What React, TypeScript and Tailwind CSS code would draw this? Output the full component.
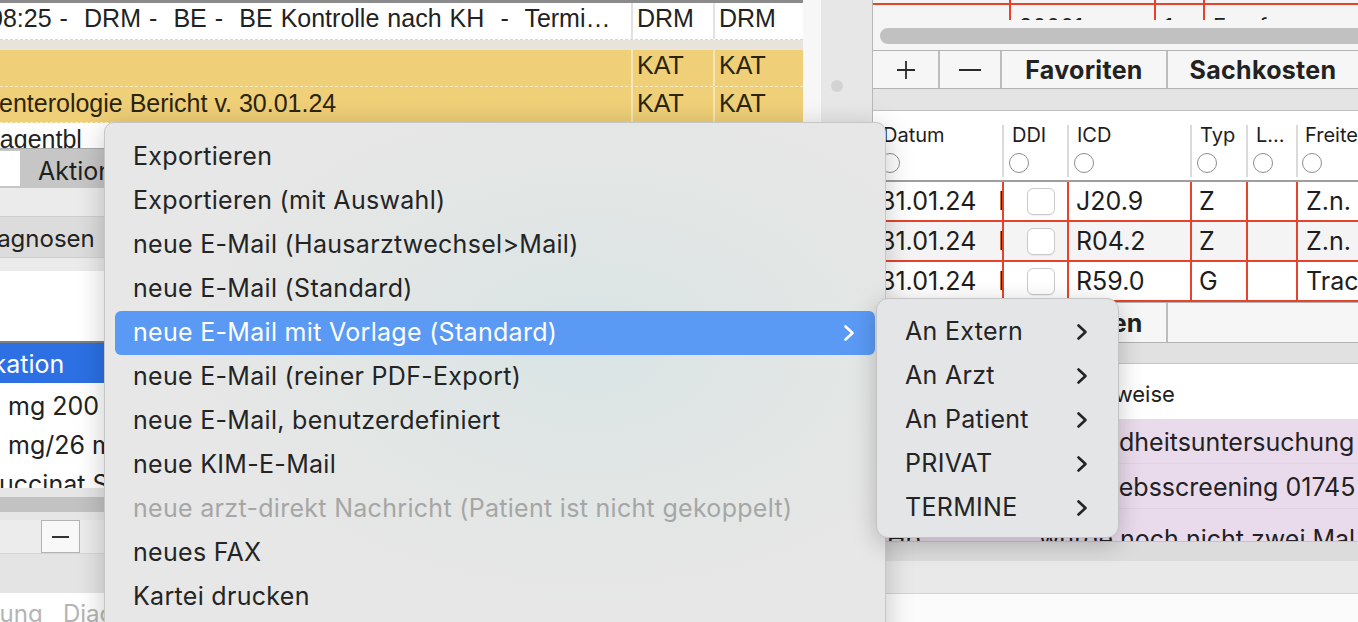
import React from "react";

/* ------------------------------------------------------------------ */
/*  Fonts                                                              */
/* ------------------------------------------------------------------ */

const SF = "font-['Inter','Noto_Sans',sans-serif]";
const HV = "font-['Liberation_Sans',Arial,sans-serif]";

/* ------------------------------------------------------------------ */
/*  Data                                                               */
/* ------------------------------------------------------------------ */

const menuItems: { label: string; active?: boolean; sub?: boolean; disabled?: boolean }[] = [
  { label: "Exportieren" },
  { label: "Exportieren (mit Auswahl)" },
  { label: "neue E-Mail (Hausarztwechsel>Mail)" },
  { label: "neue E-Mail (Standard)" },
  { label: "neue E-Mail mit Vorlage (Standard)", active: true, sub: true },
  { label: "neue E-Mail (reiner PDF-Export)" },
  { label: "neue E-Mail, benutzerdefiniert" },
  { label: "neue KIM-E-Mail" },
  { label: "neue arzt-direkt Nachricht (Patient ist nicht gekoppelt)", disabled: true },
  { label: "neues FAX" },
  { label: "Kartei drucken" },
];

const subItems = ["An Extern", "An Arzt", "An Patient", "PRIVAT", "TERMINE"];

const diagRows = [
  { icd: "J20.9", typ: "Z", text: "Z.n. Bronchitis", bg: "bg-white" },
  { icd: "R04.2", typ: "Z", text: "Z.n. Hämoptyse", bg: "bg-[#f4f4f4]" },
  { icd: "R59.0", typ: "G", text: "Tracheal", bg: "bg-white" },
];

/* ── Icons ── */

function Chevron({ className = "" }: { className?: string }) {
  return (
    <svg width="14" height="20" viewBox="0 0 14 20" fill="none" className={className}>
      <path
        d="M3.5 3.5L10.5 10L3.5 16.5"
        stroke="currentColor"
        strokeWidth="2.6"
        strokeLinecap="round"
        strokeLinejoin="round"
      />
    </svg>
  );
}

/* ------------------------------------------------------------------ */
/*  Left pane                                                          */
/* ------------------------------------------------------------------ */

function LeftPane() {
  return (
    <div className="flex w-[803px] shrink-0 flex-col bg-white">
      {/* journal table */}
      <div className="h-[3px] bg-[#8b8b8b]" />
      <div className={`flex h-[37px] border-b border-dashed border-[#d6d6d6] bg-white text-[25px] leading-[31px] text-[#222] ${HV}`}>
        <div className="w-[631px] overflow-hidden whitespace-pre [word-spacing:1.1px]">
          <span className="-ml-[11px] block">08:25 -  DRM -  BE -  BE Kontrolle nach KH  -  Termi…</span>
        </div>
        <div className="w-[82px] border-l-2 border-[#e2e2e2] pl-[4px]">DRM</div>
        <div className="flex-1 border-l-2 border-[#e2e2e2] pl-[4px]">DRM</div>
      </div>
      <div className="h-[10px] bg-[#e8e4db]" />
      <div className={`flex h-[37px] border-b border-dashed border-[#f7ecc6] bg-[#efcf77] text-[25px] leading-[31px] text-[#2a2410] ${HV}`}>
        <div className="w-[631px]" />
        <div className="w-[82px] border-l-2 border-[#f3e6b8] pl-[4px]">KAT</div>
        <div className="flex-1 border-l-2 border-[#f3e6b8] pl-[4px]">KAT</div>
      </div>
      <div className={`flex h-[36px] border-b border-dashed border-[#f7ecc6] bg-[#efcf77] text-[25px] leading-[32px] text-[#2a2410] ${HV}`}>
        <div className="w-[631px] overflow-hidden whitespace-pre">
          <span className="-ml-[1px] block">enterologie Bericht v. 30.01.24</span>
        </div>
        <div className="w-[82px] border-l-2 border-[#f3e6b8] pl-[4px]">KAT</div>
        <div className="flex-1 border-l-2 border-[#f3e6b8] pl-[4px]">KAT</div>
      </div>
      <div className={`h-[25px] overflow-hidden bg-white pt-[4px] text-[25px] leading-[25px] text-[#222] ${HV}`}>
        <span className="-ml-[21px] block whitespace-pre">Magentbl</span>
      </div>

      {/* tabs */}
      <div className={`flex h-[40px] border-t border-[#a9a9a9] bg-[#c6c6c6] text-[25px] text-[#1f1f1f] ${SF}`}>
        <div className="my-[2px] w-[20px] bg-white" />
        <div className="pl-[18px] pt-[4px] leading-[36px]">Aktionen</div>
      </div>
      <div className="h-[28px] bg-[#ebebeb]" />
      <div className={`h-[42px] overflow-hidden border-y border-[#cfcfcf] bg-[#dcdcdc] pt-[3px] text-[24px] leading-[38px] text-[#222] ${SF}`}>
        <span className="-ml-[26px] block">Diagnosen</span>
      </div>
      <div className="h-[13px] bg-[#ebebeb]" />
      <div className="h-[70px] bg-white" />
      <div className="h-[2px] bg-[#7f7f7f]" />

      {/* medication list */}
      <div className={`h-[40px] overflow-hidden bg-[#2c70e4] pt-[3px] text-[25px] leading-[37px] text-white ${SF}`}>
        <span className="-ml-[66px] block whitespace-pre">Medikation</span>
      </div>
      <div className={`h-[105px] overflow-hidden bg-white text-[25px] text-[#222] ${SF}`}>
        <div className="h-[39px] whitespace-pre pl-[8px] pt-[8px] leading-[30px]">mg 200 mg</div>
        <div className="h-[39px] whitespace-pre pl-[8px] pt-[8px] leading-[30px]">mg/26 mg</div>
        <div className="h-[39px] whitespace-pre pt-[8px] leading-[30px]">
          <span className="-ml-[1px]">uccinat Sandoz</span>
        </div>
      </div>
      <div className="h-[32px] bg-[#e6e6e6] pt-[9px]">
        <div className="h-[15px] bg-[#c2c2c2]" />
      </div>
      <div className="flex h-[33px] bg-[#ececec] pl-[41px]">
        <div className="flex w-[39px] items-center justify-center border border-[#b3b3b3] bg-[#f8f8f8]">
          <div className="h-[2px] w-[17px] bg-[#333]" />
        </div>
      </div>
      <div className="h-[40px] border-t border-[#d5d5d5] bg-[#e4e4e4]" />
      <div className={`flex-1 overflow-hidden bg-white pt-[7px] text-[24px] leading-[28px] whitespace-pre text-[#b4b4b4] ${SF}`}>
        <span className="-ml-[14px]">Lung   Diagnosen</span>
      </div>
    </div>
  );
}

/* ------------------------------------------------------------------ */
/*  Splitter                                                           */
/* ------------------------------------------------------------------ */

function Splitter() {
  return (
    <div className="flex w-[69px] shrink-0">
      <div className="w-[18px] bg-[#f7f7f7]" />
      <div className="flex-1 bg-[#e7e7e7] pt-[80px] pl-[10px]">
        <div className="h-[12px] w-[12px] rounded-full bg-[#d3d3d3]" />
      </div>
    </div>
  );
}

/* ------------------------------------------------------------------ */
/*  Right pane                                                         */
/* ------------------------------------------------------------------ */

function ButtonBar({ labels, tall }: { labels: string[]; tall?: boolean }) {
  return (
    <div
      className={`flex ${tall ? "h-[41px]" : "h-[39px]"} border-y border-[#b3b3b3] bg-[#f6f6f6] text-[25px] tracking-[0.3px] text-[#222] ${SF}`}
    >
      <div className="flex w-[67px] items-center justify-center border-r-2 border-[#bdbdbd]">
        <svg width="22" height="22" viewBox="0 0 22 22">
          <path d="M11 2v18M2 11h18" stroke="#2a2a2a" strokeWidth="1.8" />
        </svg>
      </div>
      <div className="flex w-[62px] items-center justify-center border-r-2 border-[#bdbdbd]">
        <div className="h-[2px] w-[22px] bg-[#2a2a2a]" />
      </div>
      <div className="flex w-[166px] items-center justify-center border-r-2 border-[#bdbdbd] pt-[3px] font-bold">
        {labels[0]}
      </div>
      <div className="flex min-w-0 flex-1 items-center justify-center pt-[3px] font-bold">{labels[1]}</div>
    </div>
  );
}

function RightPane() {
  return (
    <div className="flex min-w-0 flex-1 flex-col overflow-hidden border-l border-[#b8b8b8] bg-[#e4e4e4]">
      {/* top table rest */}
      <div className="flex h-[3px] bg-[#f3f3f3]">
        <div className="w-[138px] border-r-2 border-[#e5432b]" />
        <div className="w-[145px] border-r-2 border-[#e5432b]" />
        <div className="w-[49px] border-r-2 border-[#e5432b]" />
      </div>
      <div className="h-[2px] bg-[#e5432b]" />
      <div className={`flex h-[15px] overflow-hidden bg-[#f5f5f5] text-[22px] leading-[22px] text-[#222] ${SF}`}>
        <div className="w-[138px] border-r-2 border-[#e5432b]" />
        <div className="w-[145px] border-r-2 border-[#e5432b] pt-[10px] pl-[8px]">20001</div>
        <div className="w-[49px] border-r-2 border-[#e5432b] pt-[10px] pl-[8px]">1</div>
        <div className="flex-1 pt-[10px] pl-[8px]">Empfang</div>
      </div>
      <div className="h-[30px] bg-[#f5f5f5] pt-[8px] pl-[7px]">
        <div className="h-[16px] rounded-l-full bg-[#c1c1c1]" />
      </div>
      <ButtonBar labels={["Favoriten", "Sachkosten"]} />
      <div className="h-[21px] bg-[#e4e4e4]" />

      {/* diagnoses table */}
      <div className={`border-t border-[#c0c0c0] bg-white text-[#1d1d1d] ${SF}`}>
        <div className="flex h-[69px] text-[20px] leading-[20px]">
          {[
            ["Datum", "w-[129px] pl-[10px]", ""],
            ["DDI", "w-[65px] pl-[8px]", "border-l-2"],
            ["ICD", "w-[123px] pl-[8px]", "border-l-2"],
            ["Typ", "w-[56px] pl-[8px]", "border-l-2"],
            ["L…", "w-[50px] pl-[8px]", "border-l-2"],
            ["Freitext", "min-w-0 flex-1 pl-[7px]", "border-l-2"],
          ].map(([label, w, b]) => (
            <div key={label} className={`mt-[14px] mb-[3px] overflow-hidden whitespace-nowrap border-[#dadada] ${w} ${b}`}>
              <div>{label}</div>
              <div className="mt-[8px] -ml-[3px] h-[20px] w-[20px] rounded-full border border-[#8e8e8e]" />
            </div>
          ))}
        </div>
        <div className="h-[2px] bg-[#9e9e9e]" />
        {diagRows.map((r) => (
          <div key={r.icd} className={`flex h-[40px] border-b-2 border-[#e5432b] text-[25px] leading-[38px] ${r.bg}`}>
            <div className="flex w-[129px] overflow-hidden whitespace-nowrap pl-[7px]">
              <span>31.01.24</span>
              <span className="ml-[22px]">Mo</span>
            </div>
            <div className="flex w-[65px] items-center border-l-2 border-[#e5432b] pl-[23px]">
              <div className="h-[27px] w-[28px] rounded-[6px] border border-[#cacaca] bg-white shadow-[0_1px_1px_rgba(0,0,0,0.06)]" />
            </div>
            <div className="w-[123px] border-l-2 border-[#e5432b] pl-[7px]">{r.icd}</div>
            <div className="w-[56px] border-l-2 border-[#e5432b] pl-[7px]">{r.typ}</div>
            <div className="w-[50px] border-l-2 border-[#e5432b]" />
            <div className="min-w-0 flex-1 overflow-hidden whitespace-nowrap border-l-2 border-[#e5432b] pl-[8px]">{r.text}</div>
          </div>
        ))}
      </div>
      <ButtonBar labels={["Favoriten", ""]} tall />
      <div className="h-[21px] border-b border-[#c6c6c6] bg-[#e1e1e1]" />

      {/* hints */}
      <div className={`h-[55px] bg-white pl-[207px] pt-[6px] text-[22px] leading-[49px] text-[#222] ${SF}`}>Hinweise</div>
      <div className={`overflow-hidden bg-[#eadbec] text-[25px] text-[#222] whitespace-nowrap ${SF}`}>
        <div className="h-[45px] border-b border-[#e2d0e3] pl-[170px] pt-[2px] leading-[43px]">Gesundheitsuntersuchung</div>
        <div className="h-[45px] border-b border-[#e2d0e3] pl-[220px] pt-[2px] leading-[43px]">Krebsscreening 01745</div>
        <div className="h-[32px] overflow-hidden pt-[15px] leading-[30px]">
          <span className="pl-[14px]">Hb</span>
          <span className="pl-[118px]">wurde noch nicht zwei Mal</span>
        </div>
      </div>
      <div className="h-[20px] border-t border-[#c4c4c4] bg-[#dcdcdc]" />
      <div className="h-[33px] border-b border-[#d3d3d3] bg-[#e9e9e9]" />
      <div className="flex-1 bg-[#fbfbfb]" />
    </div>
  );
}

/* ------------------------------------------------------------------ */
/*  Menus                                                              */
/* ------------------------------------------------------------------ */

function ContextMenu() {
  return (
    <div
      className={`absolute left-[104px] top-[122px] h-[530px] w-[782px] rounded-[10px] border border-[#c6c6c6] bg-[#e6e7e6] bg-[radial-gradient(ellipse_at_62%_42%,#d9e4e4_0%,#e1e6e5_30%,#e6e7e6_60%)] px-[10px] pt-[12px] shadow-[0_6px_28px_rgba(0,0,0,0.22)] ${SF}`}
    >
      {menuItems.map((it) => (
        <div
          key={it.label}
          className={`flex h-[44px] items-center rounded-[6px] pl-[18px] pr-[19px] text-[25px] tracking-[0.3px] ${
            it.active ? "bg-[#5a9af5] text-white" : it.disabled ? "text-[#a6a6a6]" : "text-[#242424]"
          }`}
        >
          <span className="flex-1 whitespace-nowrap">{it.label}</span>
          {it.sub && <Chevron />}
        </div>
      ))}
    </div>
  );
}

function SubMenu() {
  return (
    <div
      className={`absolute left-[876px] top-[298px] h-[240px] w-[243px] rounded-[12px] border border-[#c4c4c4] bg-[#e4e5e6] px-[10px] pt-[11px] shadow-[0_6px_24px_rgba(0,0,0,0.22)] ${SF}`}
    >
      {subItems.map((s) => (
        <div key={s} className="flex h-[44px] items-center pl-[18px] pr-[19px] text-[25px] tracking-[0.3px] text-[#242424]">
          <span className="flex-1 whitespace-nowrap">{s}</span>
          <Chevron />
        </div>
      ))}
    </div>
  );
}

/* ------------------------------------------------------------------ */
/*  App                                                                */
/* ------------------------------------------------------------------ */

export default function App() {
  return (
    <div className="relative flex h-[622px] w-[1358px] overflow-hidden bg-[#e6e6e6]">
      <LeftPane />
      <Splitter />
      <RightPane />
      <ContextMenu />
      <SubMenu />
    </div>
  );
}
